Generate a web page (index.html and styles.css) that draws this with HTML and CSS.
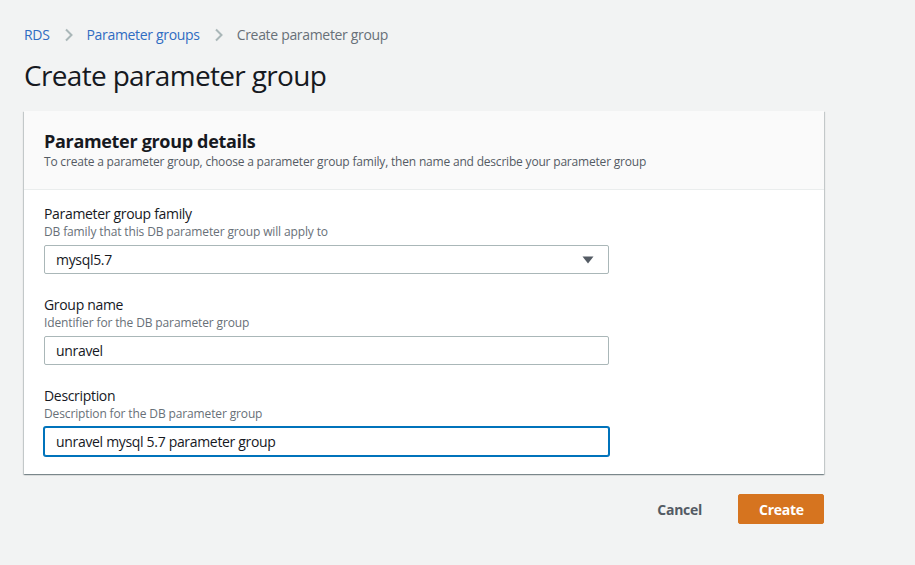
FILE: index.html
```html
<!DOCTYPE html>
<html lang="en">
<head>
<meta charset="utf-8">
<title>Create parameter group</title>
<link rel="stylesheet" href="styles.css">
</head>
<body>
<div class="page">
  <nav class="breadcrumbs">
    <a class="crumb-link" href="#">RDS</a>
    <svg class="chev" width="10" height="14" viewBox="0 0 10 14"><path d="M2 1.5 L7.5 7 L2 12.5" fill="none" stroke="#aab7b8" stroke-width="2"/></svg>
    <a class="crumb-link" href="#">Parameter groups</a>
    <svg class="chev" width="10" height="14" viewBox="0 0 10 14"><path d="M2 1.5 L7.5 7 L2 12.5" fill="none" stroke="#aab7b8" stroke-width="2"/></svg>
    <span class="crumb-current">Create parameter group</span>
  </nav>
  <h1 class="page-title">Create parameter group</h1>

  <section class="card">
    <header class="card-header">
      <h2 class="card-title">Parameter group details</h2>
      <p class="card-desc">To create a parameter group, choose a parameter group family, then name and describe your parameter group</p>
    </header>
    <div class="card-body">
      <div class="field">
        <div class="label">Parameter group family</div>
        <div class="hint">DB family that this DB parameter group will apply to</div>
        <div class="control select">
          <span>mysql5.7</span>
          <svg class="caret" width="12" height="8" viewBox="0 0 12 8"><path d="M0.5 0.5 H11.5 L6 7.5 Z" fill="#545b64"/></svg>
        </div>
      </div>
      <div class="field">
        <div class="label">Group name</div>
        <div class="hint">Identifier for the DB parameter group</div>
        <div class="control">unravel</div>
      </div>
      <div class="field">
        <div class="label">Description</div>
        <div class="hint">Description for the DB parameter group</div>
        <div class="control focused">unravel mysql 5.7 parameter group</div>
      </div>
    </div>
  </section>

  <div class="actions">
    <button class="btn btn-link">Cancel</button>
    <button class="btn btn-primary">Create</button>
  </div>
</div>
</body>
</html>
```

FILE: styles.css
```css
html, body {
  margin: 0;
  padding: 0;
  background: #f2f3f3;
}
body {
  font-family: "Open Sans", "Noto Sans", Arial, sans-serif;
  color: #16191f;
  letter-spacing: -0.02em;
  width: 915px;
  height: 565px;
  overflow: hidden;
}
.page {
  padding: 25px 0 0 24px;
  width: 800px;
}
.breadcrumbs {
  display: flex;
  align-items: center;
  height: 20px;
  font-size: 14px;
  line-height: 20px;
}
.crumb-link {
  color: #2f6cc2;
  text-decoration: none;
}
.chev {
  margin: 0 13px 0 14px;
}
.crumb-current {
  color: #687078;
}
.page-title {
  margin: 12px 0 0;
  font-size: 28px;
  line-height: 36px;
  font-weight: 400;
  letter-spacing: -0.024em;
  color: #16191f;
}
.card {
  margin-top: 18px;
  background: #fff;
  box-shadow: 0 1px 1px 0 rgba(0,28,36,.3), 1px 1px 1px 0 rgba(0,28,36,.15), -1px 1px 1px 0 rgba(0,28,36,.15);
}
.card-header {
  background: #fafafa;
  border-bottom: 1px solid #eaeded;
  padding: 19px 20px 19px;
}
.card-title {
  margin: 0;
  font-size: 18px;
  line-height: 22px;
  font-weight: 700;
}
.card-desc {
  margin: 2px 0 0;
  font-size: 12px;
  line-height: 16px;
  letter-spacing: -0.016em;
  color: #545b64;
}
.card-body {
  padding: 14px 20px 18px;
  display: flex;
  flex-direction: column;
  gap: 21px;
}
.field {
  display: flex;
  flex-direction: column;
}
.label {
  font-size: 14px;
  line-height: 20px;
}
.hint {
  font-size: 12px;
  line-height: 16px;
  letter-spacing: -0.011em;
  color: #687078;
  margin-bottom: 5px;
}
.control {
  box-sizing: border-box;
  width: 565px;
  height: 29px;
  border: 1px solid #aab7b8;
  border-radius: 2px;
  padding: 0 11px;
  font-size: 14px;
  line-height: 27px;
  display: flex;
  align-items: center;
  background: #fff;
}
.select {
  justify-content: space-between;
  padding-right: 14px;
}
.focused {
  border-color: #0073bb;
  box-shadow: 0 0 0 1px #0073bb;
}
.actions {
  display: flex;
  justify-content: flex-end;
  align-items: center;
  gap: 15px;
  margin-top: 20px;
}
.btn {
  font-family: inherit;
  font-size: 14px;
  font-weight: 700;
  letter-spacing: -0.02em;
  border-radius: 2px;
  height: 30px;
  padding: 0 20px;
  cursor: pointer;
}
.btn-link {
  background: transparent;
  border: 1px solid transparent;
  color: #545b64;
}
.btn-primary {
  background: #d6741f;
  border: 1px solid #d6741f;
  color: #fff;
  width: 86px;
}
```
